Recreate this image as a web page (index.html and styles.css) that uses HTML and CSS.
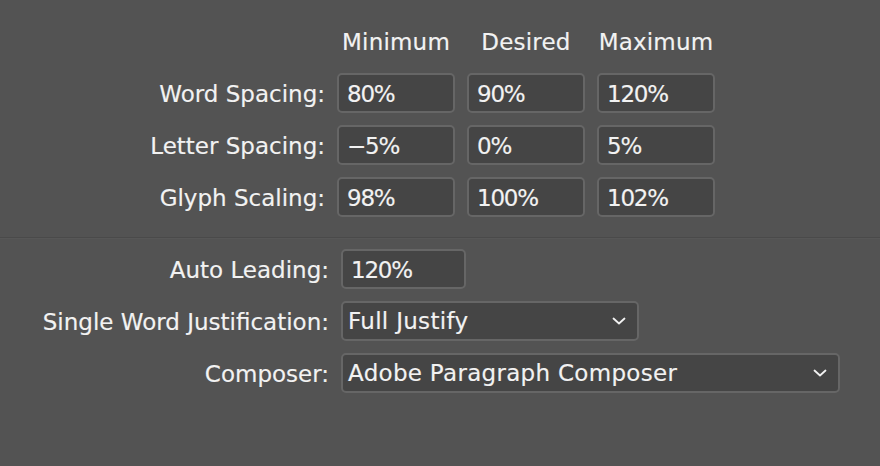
FILE: index.html
```html
<!DOCTYPE html>
<html>
<head>
<meta charset="utf-8">
<link rel="stylesheet" href="styles.css">
</head>
<body>
<div class="panel">
  <div class="spacing-grid">
    <div></div>
    <div class="col-head">Minimum</div>
    <div class="col-head">Desired</div>
    <div class="col-head">Maximum</div>

    <div class="label">Word Spacing:</div>
    <div class="field num">80%</div>
    <div class="field num">90%</div>
    <div class="field num">120%</div>

    <div class="label">Letter Spacing:</div>
    <div class="field num">−5%</div>
    <div class="field num">0%</div>
    <div class="field num">5%</div>

    <div class="label">Glyph Scaling:</div>
    <div class="field num">98%</div>
    <div class="field num">100%</div>
    <div class="field num">102%</div>
  </div>

  <div class="separator"></div>

  <div class="options-grid">
    <div class="label">Auto Leading:</div>
    <div class="field num field-leading">120%</div>

    <div class="label">Single Word Justification:</div>
    <div class="field select select-justify">
      <span class="select-text">Full Justify</span>
      <svg class="chevron" width="14" height="8" viewBox="0 0 14 8"><polyline points="1.5,1.5 7,6.5 12.5,1.5" fill="none" stroke="#f2f2f2" stroke-width="1.8" stroke-linecap="round" stroke-linejoin="round"/></svg>
    </div>

    <div class="label">Composer:</div>
    <div class="field select select-composer">
      <span class="select-text">Adobe Paragraph Composer</span>
      <svg class="chevron" width="14" height="8" viewBox="0 0 14 8"><polyline points="1.5,1.5 7,6.5 12.5,1.5" fill="none" stroke="#f2f2f2" stroke-width="1.8" stroke-linecap="round" stroke-linejoin="round"/></svg>
    </div>
  </div>
</div>
</body>
</html>
```
FILE: styles.css
```css
html, body {
  margin: 0;
  padding: 0;
  background: #535353;
}
body {
  width: 880px;
  height: 466px;
  overflow: hidden;
  font-family: "DejaVu Sans", "Noto Sans", sans-serif;
  font-size: 23px;
  color: #f2f2f2;
  -webkit-text-stroke: 0.15px #f2f2f2;
}
.panel {
  display: flex;
  flex-direction: column;
}
.spacing-grid {
  display: grid;
  grid-template-columns: 326px 118px 118px 118px;
  grid-auto-rows: 40px;
  column-gap: 12px;
  row-gap: 12px;
  padding-top: 21px;
  margin-left: -1px;
}
.col-head {
  text-align: center;
  line-height: 42px;
  letter-spacing: 0.2px;
  align-self: start;
}
.label {
  text-align: right;
  line-height: 42px;
  white-space: nowrap;
}
.field {
  box-sizing: border-box;
  height: 40px;
  border: 2px solid #666666;
  border-radius: 5px;
  background: #454545;
  padding-left: 8px;
  line-height: 38px;
  white-space: nowrap;
}
.num {
  letter-spacing: -1.2px;
}
.separator {
  margin-top: 20px;
  height: 1px;
  background: #4a4a4a;
  border-bottom: 1px solid #575757;
}
.options-grid {
  display: grid;
  grid-template-columns: 329px auto;
  grid-auto-rows: 40px;
  column-gap: 12px;
  row-gap: 12px;
  padding-top: 10px;
  justify-items: start;
}
.options-grid .label {
  justify-self: stretch;
}
.field-leading {
  width: 125px;
}
.select {
  display: flex;
  align-items: center;
  justify-content: space-between;
  padding-left: 5px;
  padding-right: 11px;
}
.select-text {
  letter-spacing: 0.3px;
  line-height: 38px;
}
.select-justify {
  width: 298px;
}
.select-composer {
  width: 499px;
}
.chevron {
  display: block;
}
```
